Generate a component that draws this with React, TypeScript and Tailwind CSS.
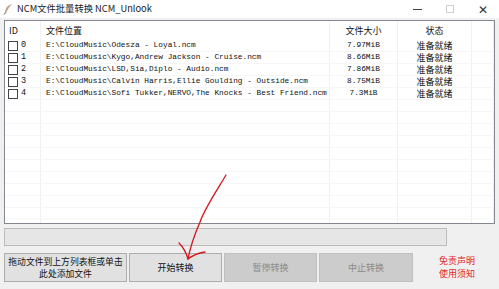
import React from 'react';

const files = [
  { id: 0, path: 'E:\\CloudMusic\\Odesza - Loyal.ncm', size: '7.97MiB' },
  { id: 1, path: 'E:\\CloudMusic\\Kygo,Andrew Jackson - Cruise.ncm', size: '8.66MiB' },
  { id: 2, path: 'E:\\CloudMusic\\LSD,Sia,Diplo - Audio.ncm', size: '7.86MiB' },
  { id: 3, path: 'E:\\CloudMusic\\Calvin Harris,Ellie Goulding - Outside.ncm', size: '8.75MiB' },
  { id: 4, path: 'E:\\CloudMusic\\Sofi Tukker,NERVO,The Knocks - Best Friend.ncm', size: '7.3MiB' },
];

const cjk = "font-['Segoe_UI','Noto_Sans_CJK_SC',sans-serif]";
const mono = "font-['Liberation_Mono','Noto_Sans_CJK_SC',monospace]";
const cols = 'grid grid-cols-[36px_289px_68px_74px_1fr]';
const cell = 'border-r border-[#f0f0f0] overflow-hidden whitespace-nowrap';

function Arrow() {
  return (
    <svg className="absolute left-0 top-0 pointer-events-none" width="499" height="289">
      <path
        d="M226 175 C 216 192, 205 208, 200 222 C 194 236, 190 248, 188 259"
        fill="none"
        stroke="#d4141c"
        strokeWidth="1.3"
        strokeLinecap="round"
      />
      <path
        d="M179 243 C 183 247, 186 252, 188 259 C 193 255, 199 253, 205 252"
        fill="none"
        stroke="#d4141c"
        strokeWidth="1.3"
        strokeLinecap="round"
      />
    </svg>
  );
}

export default function App() {
  return (
    <div className={`relative w-[499px] h-[289px] bg-[#f0f0f0] flex flex-col overflow-hidden ${cjk}`}>
      {/* Title bar */}
      <div className="h-[18px] bg-white flex items-center">
        <svg className="ml-[3px]" width="11" height="12" viewBox="0 0 11 12">
          <path d="M9 1 C 5 2, 2 5, 2 10 L 3 11 C 4 7, 6 4, 9 1 Z" fill="#b9a58a" />
          <path d="M2 10 L 1 11.5" stroke="#7a6a55" strokeWidth="1" />
        </svg>
        <span className="ml-[3px] text-[9.3px] text-[#1a1a1a] leading-none">NCM文件批量转换 NCM_Unlook</span>
        <div className="ml-auto flex items-center h-full text-[#333]">
          <div className="w-[32px] flex justify-center">
            <div className="w-[9px] h-[1px] bg-[#444]" />
          </div>
          <div className="w-[34px] flex justify-center">
            <div className="w-[8px] h-[8px] border border-[#cfcfcf]" />
          </div>
          <div className="w-[32px] flex justify-center text-[12px] leading-none font-light">✕</div>
        </div>
      </div>

      {/* List */}
      <div className="mt-[2px] ml-[4px] w-[491px] h-[204px] border border-[#828790] bg-white overflow-hidden text-[#111]">
        <div className={`${cols} h-[19px] items-center text-[9px]`}>
          <div className={`${cell} h-full flex items-center pl-[4px]`}>ID</div>
          <div className={`${cell} h-full flex items-center pl-[5px]`}>文件位置</div>
          <div className={`${cell} h-full flex items-center justify-center`}>文件大小</div>
          <div className={`${cell} h-full flex items-center justify-center`}>状态</div>
          <div className={`${cell} h-full`} />
        </div>
        {files.map((f) => (
          <div key={f.id} className={`${cols} h-[12px] border-b border-[#f6f6f6]`}>
            <div className={`${cell} flex items-center pl-[3px] gap-[3px]`}>
              <div className="w-[10px] h-[10px] border border-[#444] bg-white" />
              <span className={`${mono} text-[8.5px]`}>{f.id}</span>
            </div>
            <div className={`${cell} flex items-center pl-[5px] ${mono} text-[7.8px]`}>{f.path}</div>
            <div className={`${cell} flex items-center justify-center ${mono} text-[7.8px]`}>{f.size}</div>
            <div className={`${cell} flex items-center justify-center text-[9px]`}>准备就绪</div>
            <div className={cell} />
          </div>
        ))}
        {Array.from({ length: 11 }).map((_, i) => (
          <div key={i} className={`${cols} h-[12px] border-b border-[#f6f6f6]`}>
            <div className={cell} />
            <div className={cell} />
            <div className={cell} />
            <div className={cell} />
            <div className={cell} />
          </div>
        ))}
      </div>

      {/* Progress */}
      <div className="mt-[4px] ml-[4px] w-[443px] h-[18px] border border-[#bcbcbc] bg-[#e6e6e6]" />

      {/* Buttons */}
      <div className="mt-[7px] ml-[4px] flex items-stretch gap-[2px] h-[29px]">
        <button className="w-[123px] border border-[#adadad] bg-[#e1e1e1] text-[8.8px] leading-[12px] text-[#111] flex flex-col items-center justify-center">
          <span className="block leading-[12px]">拖动文件到上方列表框或单击</span>
          <span className="block leading-[12px]">此处添加文件</span>
        </button>
        <button className="w-[93px] border border-[#adadad] bg-[#e1e1e1] text-[9px] text-[#111]">开始转换</button>
        <button className="w-[93px] border border-[#bfbfbf] bg-[#cccccc] text-[9px] text-[#8a8a8a]">暂停转换</button>
        <button className="w-[94px] border border-[#bfbfbf] bg-[#cccccc] text-[9px] text-[#8a8a8a]">中止转换</button>
        <div className="ml-[24px] flex flex-col justify-center text-[9px] text-[#e3262a]">
          <span className="block leading-[12.5px]">免责声明</span>
          <span className="block leading-[12.5px]">使用须知</span>
        </div>
      </div>

      <Arrow />
    </div>
  );
}
